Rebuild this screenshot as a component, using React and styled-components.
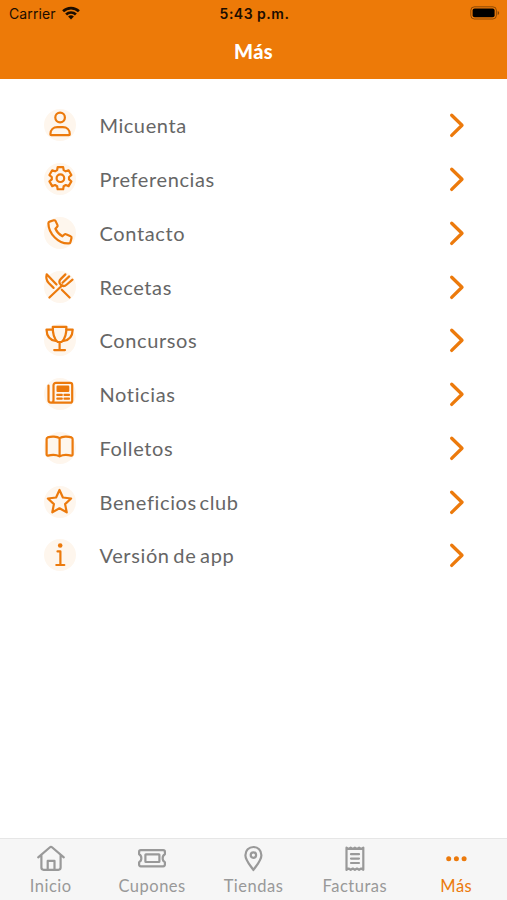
import styled, { createGlobalStyle } from "styled-components";

const menu = [
  { label: "Mi cuenta", icon: <PersonIcon />, wordSpacing: -6 },
  { label: "Preferencias", icon: <GearIcon /> },
  { label: "Contacto", icon: <PhoneIcon /> },
  { label: "Recetas", icon: <CutleryIcon /> },
  { label: "Concursos", icon: <TrophyIcon /> },
  { label: "Noticias", icon: <NewsIcon /> },
  { label: "Folletos", icon: <BookIcon /> },
  { label: "Beneficios club", icon: <StarIcon />, wordSpacing: -3 },
  { label: "Versión de app", icon: <InfoIcon />, wordSpacing: -2 },
];

const tabs = [
  { label: "Inicio", icon: <HomeIcon /> },
  { label: "Cupones", icon: <TicketIcon /> },
  { label: "Tiendas", icon: <PinIcon /> },
  { label: "Facturas", icon: <ReceiptIcon /> },
  { label: "Más", icon: <DotsIcon />, active: true },
];

export default function App() {
  return (
    <>
      <GlobalStyle />
      <Screen>
        <Header>
          <StatusBar>
            <Carrier>
              Carrier
              <WifiIcon />
            </Carrier>
            <Time>5:43 p.m.</Time>
            <BatteryIcon />
          </StatusBar>
          <Title>Más</Title>
        </Header>
        <Menu>
          {menu.map(({ label, icon, wordSpacing }) => (
            <MenuItem key={label}>
              <IconDisc>{icon}</IconDisc>
              <MenuLabel $wordSpacing={wordSpacing}>{label}</MenuLabel>
              <Chevron viewBox="0 0 18 28">
                <path d="M3.7 4.2 14 14.300 3.7 24.400" />
              </Chevron>
            </MenuItem>
          ))}
        </Menu>
        <TabBar>
          {tabs.map(({ label, icon, active }) => (
            <Tab key={label} $active={active}>
              {icon}
              <TabLabel>{label}</TabLabel>
            </Tab>
          ))}
        </TabBar>
      </Screen>
    </>
  );
}

function PersonIcon() {
  return (
    <Icon>
      <circle cx="16.1" cy="8.5" r="4.8" />
      <path d="M6.4 25.2c0-4.6 3-7 7-7h5.4c4 0 7 2.4 7 7 0 .6-.4.9-.9.9H7.3c-.5 0-.9-.3-.9-.9Z" />
    </Icon>
  );
}

// six teeth, each one drawn as a root, two tip corners and a root
const gearPath = () => {
  const points = [];
  for (let tooth = 0; tooth < 6; tooth++) {
    [[-22, 8.7], [-14, 11.4], [14, 11.4], [22, 8.7]].forEach(([offset, r]) => {
      const angle = ((tooth * 60 + offset - 90) * Math.PI) / 180;
      points.push(
        `${(16.4 + r * Math.cos(angle)).toFixed(2)} ${(15.2 + r * Math.sin(angle)).toFixed(2)}`
      );
    });
  }
  return `M${points.join("L")}Z`;
};

function GearIcon() {
  return (
    <Icon>
      <path d={gearPath()} />
      <circle cx="16.4" cy="15.2" r="3.8" />
    </Icon>
  );
}

function PhoneIcon() {
  return (
    <Icon>
      <path d="M5.6 4.6 9.8 3.3c.8-.2 1.4.1 1.8.8l1.9 4c.3.7.2 1.2-.3 1.7l-1.8 2c1.5 3.3 3.9 5.8 7 7.5l2-1.8c.5-.4 1-.5 1.6-.2l4.6 1.9c.8.3 1.1.9.9 1.7l-1 4c-.2.8-.7 1.4-1.6 1.5C14.6 27.2 4.4 16.5 4.4 6.2c0-.8.4-1.4 1.2-1.6Z" />
    </Icon>
  );
}

function CutleryIcon() {
  return (
    <Icon>
      <path d="M9.6 16.9 4.7 12C2.4 9.6 2 6.1 2.7 3.3l9.8 10.2" />
      <path d="m17.8 18.7 7.8 7.8M5.4 26.5l12.7-12" />
      <path d="m21.4 3.4-4.5 4.5c-2 2-1.9 4-.3 5.700 1.700 1.700 4.200 1.700 6.200-.1l5.700-4.800M25.200 5.400l-6.700 6.400" />
    </Icon>
  );
}

function TrophyIcon() {
  return (
    <Icon>
      <path d="M8.8 2.8h13.600c.2 7.200-1.600 12.400-4.800 15.200h-4C10.400 15.200 8.600 10 8.800 2.800Z" />
      <path d="M8.800 5.600H2.500c.2 6 3.500 10.500 9.300 11.400M22.400 5.600h6.300c-.2 6-3.500 10.500-9.300 11.400M15.600 18v8M10.200 26.100h10.800" />
    </Icon>
  );
}

function NewsIcon() {
  return (
    <Icon>
      <path d="M12 4.800h14.200a2 2 0 0 1 2 2v15.900a2 2 0 0 1-2 2H7c-1.600 0-2.500-1-2.500-2.500V7.600M9.500 22.500V7.300A2.500 2.500 0 0 1 12 4.800M9.500 22c0 1.700-.8 2.700-2.200 2.700" />
      <rect x="13.600" y="8.700" width="10.600" height="4.300" fill="currentColor" />
      <path d="M13.300 16.900h4.500M20.500 16.900H25M13.300 20.700h4.500M20.500 20.700H25" />
    </Icon>
  );
}

function BookIcon() {
  return (
    <Icon>
      <path d="M15.600 6.200C12.800 4.200 7.300 4.100 3.700 5.400c-.7.300-1.100.8-1.100 1.500v15.700c0 .8.600 1.200 1.300 1 4.400-1.200 8.500-1.100 11.700.8 3.200-1.900 7.300-2 11.700-.8.700.2 1.300-.2 1.300-1V6.900c0-.7-.4-1.200-1.100-1.500-3.600-1.300-9.100-1.200-11.900.8ZM15.600 6.200v18.200" />
    </Icon>
  );
}

function StarIcon() {
  return (
    <Icon>
      <path d="m15.500 4 3.400 7.500 8.200 1-6 5.600 1.600 8.200-7.200-4-7.200 4 1.600-8.200-6-5.600 8.200-1Z" />
    </Icon>
  );
}

function InfoIcon() {
  return (
    <Icon>
      <circle cx="16.200" cy="6.500" r="2.300" fill="currentColor" stroke="none" />
      <path d="M13.500 12.400h2.900v13.500M12.300 26h8" />
    </Icon>
  );
}

function HomeIcon() {
  return (
    <Icon>
      <path d="M3.200 15.300 14.700 5.500c.8-.7 1.800-.7 2.600 0l11.500 9.800M6.400 13v12.600c0 1.400.8 2.200 2.200 2.200h14.800c1.400 0 2.200-.8 2.200-2.200V13" />
      <path d="M12.700 27.500v-8.600h6.800v8.600" />
    </Icon>
  );
}

function TicketIcon() {
  return (
    <Icon>
      <path d="M4.800 8.100h22.400c1.200 0 1.700.6 1.700 1.700v2.500c-3 1.600-3 6.200 0 7.800v2.500c0 1.100-.5 1.700-1.700 1.700H4.800c-1.200 0-1.700-.6-1.700-1.700v-2.500c3-1.600 3-6.200 0-7.800V9.800c0-1.100.5-1.700 1.700-1.700Z" />
      <rect x="9.400" y="12.300" width="14" height="7.700" rx=".5" />
    </Icon>
  );
}

function PinIcon() {
  return (
    <Icon>
      <path d="M16.400 28c-3.600-5.300-8-9.800-8-14.800 0-4.700 3.500-8.200 8-8.200s8 3.500 8 8.200c0 5-4.400 9.500-8 14.800Z" />
      <circle cx="16.400" cy="13.100" r="2.700" />
    </Icon>
  );
}

function ReceiptIcon() {
  return (
    <Icon>
      <path d="m7.500 5.700 2.100 1.300 2.100-1.300L13.800 7l2.100-1.300L18 7l2.100-1.300L22.200 7l2.100-1.300v22.100l-2.100-1.300-2.100 1.300-2.100-1.300-2.100 1.300-2.100-1.300-2.100 1.300-2.100-1.300-2.100 1.300Z" />
      <path d="M12 12.200h8M12 16.600h8M12 21h8" />
    </Icon>
  );
}

function DotsIcon() {
  return (
    <Icon>
      <g fill="currentColor" stroke="none">
        <circle cx="8.700" cy="16.700" r="2.500" />
        <circle cx="16.400" cy="16.700" r="2.500" />
        <circle cx="24.100" cy="16.700" r="2.500" />
      </g>
    </Icon>
  );
}

function WifiIcon() {
  return (
    <Wifi viewBox="0 0 18 14">
      <g fill="none" stroke="currentColor" strokeWidth="2.700">
        <path d="M1.100 5.300a11.300 11.300 0 0 1 15.800 0" />
        <path d="M4.100 8.500a7 7 0 0 1 9.800 0" />
      </g>
      <path d="M9 13.600 6.100 10.600a4.100 4.100 0 0 1 5.800 0Z" fill="currentColor" />
    </Wifi>
  );
}

function BatteryIcon() {
  return (
    <Battery viewBox="0 0 30 14">
      <rect x=".8" y=".8" width="25.600" height="12.200" rx="3.600" fill="none" stroke="#000" strokeOpacity=".4" />
      <rect x="2.600" y="2.500" width="22" height="8.800" rx="2" />
      <path d="M27.700 5v4q1.500-.7 1.500-2t-1.500-2Z" fillOpacity=".45" />
    </Battery>
  );
}

const GlobalStyle = createGlobalStyle`
  * {
    box-sizing: border-box;
  }
  body {
    margin: 0;
    background: #fff;
  }
`;
const Screen = styled.div`
  display: flex;
  flex-direction: column;
  width: 507px;
  height: 900px;
  overflow: hidden;
  background-color: #fff;
  font-family: Lato, sans-serif;
`;
const Header = styled.header`
  height: 79px;
  flex: none;
  background-color: #ed7a08;
`;
const StatusBar = styled.div`
  display: grid;
  grid-template-columns: 1fr auto 1fr;
  align-items: center;
  height: 27px;
  padding: 0 7px 0 9px;
  color: #1b0d00;
  font-family: Inter, sans-serif;
  font-size: 14px;
`;
const Carrier = styled.span`
  display: flex;
  align-items: center;
  gap: 6px;
  letter-spacing: 0.1px;
`;
const Wifi = styled.svg`
  width: 18px;
  height: 14px;
  margin-top: -2px;
`;
const Time = styled.span`
  font-weight: 600;
  letter-spacing: 0.5px;
`;
const Battery = styled.svg`
  width: 30px;
  height: 14px;
  margin-top: -1px;
  justify-self: end;
`;
const Title = styled.h1`
  margin: 0;
  color: #fff;
  font-size: 20px;
  font-weight: 900;
  line-height: 49px;
  letter-spacing: 0.3px;
  text-align: center;
`;
const Menu = styled.ul`
  flex: 1;
  margin: 0;
  padding: 19.6px 41px 0 44px;
  list-style: none;
`;
const MenuItem = styled.li`
  display: flex;
  align-items: center;
  height: 53.75px;
`;
const IconDisc = styled.span`
  display: flex;
  align-items: center;
  justify-content: center;
  width: 32px;
  height: 32px;
  border-radius: 50%;
  background-color: #fef6ed;
  color: #ec7a0c;
`;
const Icon = styled.svg.attrs({ viewBox: "0 0 32 32" })`
  display: block;
  flex: none;
  width: 32px;
  height: 32px;
  fill: none;
  stroke: currentColor;
  stroke-width: 2.2;
  stroke-linecap: round;
  stroke-linejoin: round;
`;
const MenuLabel = styled.span`
  flex: 1;
  margin-left: 23.5px;
  color: #666;
  font-size: 20px;
  letter-spacing: 0.62px;
  word-spacing: ${({ $wordSpacing = 0 }) => $wordSpacing}px;
`;
const Chevron = styled.svg`
  width: 18px;
  height: 28px;
  fill: none;
  stroke: #ec7a0c;
  stroke-width: 3.3;
  stroke-linecap: round;
  stroke-linejoin: round;
`;
const TabBar = styled.nav`
  display: grid;
  grid-template-columns: repeat(5, 1fr);
  flex: none;
  height: 62px;
  border-top: 1px solid #e6e6e6;
  background-color: #f6f6f6;
`;
const Tab = styled.a`
  display: flex;
  flex-direction: column;
  align-items: center;
  padding-top: 3px;
  color: ${({ $active }) => ($active ? "#ec7a0c" : "#999")};
`;
const TabLabel = styled.span`
  margin-top: 2px;
  font-size: 16.5px;
  line-height: 20px;
  letter-spacing: 0.5px;
`;
